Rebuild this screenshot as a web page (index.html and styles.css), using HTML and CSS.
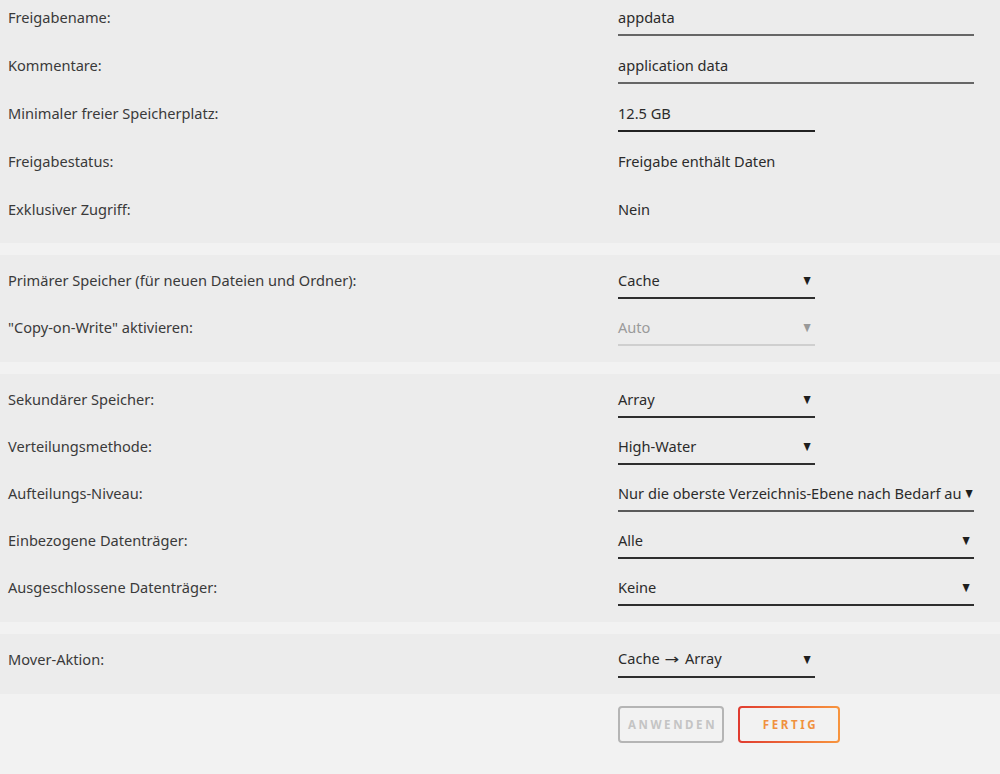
FILE: index.html
```html
<!DOCTYPE html>
<html lang="de">
<head>
<meta charset="utf-8">
<title>Freigabe</title>
<link rel="stylesheet" href="styles.css">
</head>
<body>
<div class="section first">
  <div class="row"><div class="label">Freigabename:</div><div class="value"><div class="field input wide">appdata</div></div></div>
  <div class="row"><div class="label">Kommentare:</div><div class="value"><div class="field input wide">application data</div></div></div>
  <div class="row"><div class="label">Minimaler freier Speicherplatz:</div><div class="value"><div class="field input narrow dark">12.5 GB</div></div></div>
  <div class="row"><div class="label">Freigabestatus:</div><div class="value"><div class="text">Freigabe enthält Daten</div></div></div>
  <div class="row short"><div class="label">Exklusiver Zugriff:</div><div class="value"><div class="text">Nein</div></div></div>
</div>
<div class="section">
  <div class="row"><div class="label">Primärer Speicher (für neuen Dateien und Ordner):</div><div class="value"><div class="field select narrow"><span class="sel-text">Cache</span><span class="arrow">▼</span></div></div></div>
  <div class="row"><div class="label">"Copy-on-Write" aktivieren:</div><div class="value"><div class="field select narrow disabled"><span class="sel-text">Auto</span><span class="arrow">▼</span></div></div></div>
</div>
<div class="section">
  <div class="row"><div class="label">Sekundärer Speicher:</div><div class="value"><div class="field select narrow"><span class="sel-text">Array</span><span class="arrow">▼</span></div></div></div>
  <div class="row"><div class="label">Verteilungsmethode:</div><div class="value"><div class="field select narrow"><span class="sel-text">High-Water</span><span class="arrow">▼</span></div></div></div>
  <div class="row"><div class="label">Aufteilungs-Niveau:</div><div class="value"><div class="field select wide grey"><span class="sel-text">Nur die oberste Verzeichnis-Ebene nach Bedarf au</span><span class="arrow tight">▼</span></div></div></div>
  <div class="row"><div class="label">Einbezogene Datenträger:</div><div class="value"><div class="field select wide"><span class="sel-text">Alle</span><span class="arrow">▼</span></div></div></div>
  <div class="row"><div class="label">Ausgeschlossene Datenträger:</div><div class="value"><div class="field select wide"><span class="sel-text">Keine</span><span class="arrow">▼</span></div></div></div>
</div>
<div class="section">
  <div class="row"><div class="label">Mover-Aktion:</div><div class="value"><div class="field select narrow"><span class="sel-text">Cache <span class="rarr">→</span> Array</span><span class="arrow">▼</span></div></div></div>
</div>
<div class="buttons">
  <button class="btn apply" disabled>ANWENDEN</button>
  <button class="btn done">FERTIG</button>
</div>
</body>
</html>
```
FILE: styles.css
```css
html, body {
  margin: 0;
  padding: 0;
  background: #f2f2f2;
  font-family: "Noto Sans", "Open Sans", sans-serif;
  font-size: 14.6px;
  color: #3a3a3a;
}
.section {
  background: #ececec;
  padding: 8px 0 5px;
  margin-bottom: 12px;
}
.section.first {
  padding: 0 0 3px;
}
.row {
  display: grid;
  grid-template-columns: 618px 1fr;
  height: 47px;
}
.section.first .row {
  height: 48px;
}
.label {
  padding-left: 8px;
  line-height: 35px;
  white-space: nowrap;
}
.value {
  min-width: 0;
}
.text {
  line-height: 35px;
  color: #2b2b2b;
}
.field {
  box-sizing: border-box;
  height: 36px;
  line-height: 35px;
  border-bottom: 2px solid #555;
  color: #2b2b2b;
}
.field.input {
  border-bottom-color: #666;
}
.field.dark {
  border-bottom-color: #222;
}
.field.wide { width: 356px; }
.field.narrow { width: 197px; }
.select {
  display: flex;
  align-items: center;
  border-bottom-color: #2e2e2e;
}
.select.grey { border-bottom-color: #5a5a5a; }
.sel-text {
  flex: 1;
  min-width: 0;
  white-space: nowrap;
}
.rarr {
  display: inline-block;
  font-family: "DejaVu Sans", sans-serif;
  font-size: 14px;
  transform: scaleX(1.25);
  margin: 0 3px;
}
.arrow {
  font-family: "DejaVu Sans", sans-serif;
  font-size: 11px;
  width: 10px;
  margin-right: 3px;
  text-align: center;
  color: #1e1e1e;
  transform: scaleX(0.85);
}
.arrow.tight { margin-right: 0; }
.select.disabled {
  color: #9a9a9a;
  border-bottom-color: #cfcfcf;
}
.select.disabled .arrow { color: #999; }
.buttons {
  display: flex;
  gap: 14px;
  padding-left: 618px;
  margin-top: 1px;
}
.btn {
  box-sizing: border-box;
  height: 37px;
  border-radius: 4px;
  font-family: "Noto Sans", "Open Sans", sans-serif;
  font-size: 11.5px;
  font-weight: bold;
  letter-spacing: 2.6px;
  padding: 0 0 0 3px;
}
.btn.apply {
  width: 106px;
  border: 2px solid #b5b5b5;
  background: #f2f2f2;
  color: #c4c4c4;
}
.btn.done {
  width: 102px;
  border: 2px solid transparent;
  background: linear-gradient(#f2f2f2, #f2f2f2) padding-box, linear-gradient(90deg, #e03b30, #f8953e) border-box;
  color: #f0913e;
}
```
